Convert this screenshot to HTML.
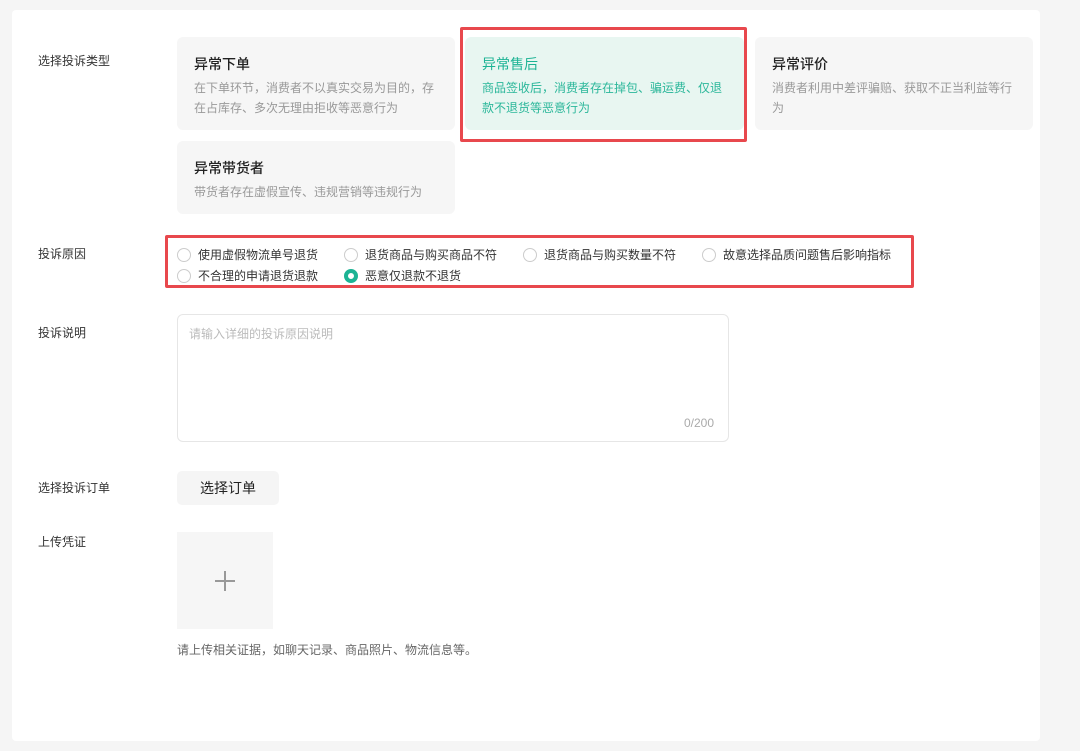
<!DOCTYPE html>
<html><head><meta charset="utf-8"><style>
*{margin:0;padding:0;box-sizing:border-box}
body{width:1080px;height:751px;background:#f5f5f5;font-family:"Liberation Sans","Noto Sans CJK SC",sans-serif;position:relative;overflow:hidden}
.card{position:absolute;left:12px;top:10px;width:1028px;height:731px;background:#fff;border-radius:4px}
.abs{position:absolute}
.lbl{position:absolute;left:38px;font-size:12px;color:#333;line-height:16px}
.tc{position:absolute;background:#f6f6f6;border-radius:6px;padding:0 17px}
.tc h4{position:absolute;left:17px;top:18px;font-size:14px;font-weight:500;color:#222;line-height:18px}
.tc p{position:absolute;left:17px;right:14px;top:42px;font-size:12px;color:#999;line-height:19.5px}
.radio{position:absolute;font-size:12px;color:#333;line-height:16px;padding-left:21px}
.radio:before{content:"";position:absolute;left:0;top:1px;width:14px;height:14px;border:1px solid #ccc;border-radius:50%;box-sizing:border-box}
.radio.on:before{border:4px solid #1cb394}
</style></head><body>
<div class="card"></div>
<div class="lbl" style="top:53px">选择投诉类型</div>
<div class="tc" style="left:177px;top:37px;width:278px;height:93px"><h4>异常下单</h4><p>在下单环节，消费者不以真实交易为目的，存在占库存、多次无理由拒收等恶意行为</p></div>
<div class="tc" style="left:465px;top:37px;width:279px;height:93px;background:#e8f6f1"><h4 style="color:#1cb394;font-weight:400">异常售后</h4><p style="color:#2bb79a">商品签收后，消费者存在掉包、骗运费、仅退款不退货等恶意行为</p></div>
<div class="abs" style="left:460px;top:27px;width:287px;height:115px;border:3px solid #e8484d;border-radius:2px"></div>
<div class="tc" style="left:755px;top:37px;width:278px;height:93px"><h4>异常评价</h4><p>消费者利用中差评骗赔、获取不正当利益等行为</p></div>
<div class="tc" style="left:177px;top:141px;width:278px;height:73px"><h4 style="top:18px">异常带货者</h4><p style="top:42px">带货者存在虚假宣传、违规营销等违规行为</p></div>

<div class="lbl" style="top:246px">投诉原因</div>
<div class="abs" style="left:165px;top:235px;width:749px;height:53px;border:3px solid #e8484d;border-radius:2px"></div>
<div class="radio" style="left:177px;top:247px">使用虚假物流单号退货</div>
<div class="radio" style="left:344px;top:247px">退货商品与购买商品不符</div>
<div class="radio" style="left:523px;top:247px">退货商品与购买数量不符</div>
<div class="radio" style="left:702px;top:247px">故意选择品质问题售后影响指标</div>
<div class="radio" style="left:177px;top:268px">不合理的申请退货退款</div>
<div class="radio on" style="left:344px;top:268px">恶意仅退款不退货</div>

<div class="lbl" style="top:325px">投诉说明</div>
<div class="abs" style="left:177px;top:314px;width:552px;height:128px;border:1px solid #e6e6e6;border-radius:6px"></div>
<div class="abs" style="left:189px;top:325px;font-size:12px;color:#bbb">请输入详细的投诉原因说明</div>
<div class="abs" style="left:684px;top:416px;font-size:12px;color:#aaa">0/200</div>

<div class="lbl" style="top:480px">选择投诉订单</div>
<div class="abs" style="left:177px;top:471px;width:102px;height:34px;background:#f5f5f5;border-radius:5px;font-size:14px;color:#222;text-align:center;line-height:34px">选择订单</div>

<div class="lbl" style="top:534px">上传凭证</div>
<div class="abs" style="left:177px;top:532px;width:96px;height:97px;background:#f6f6f6"></div>
<div class="abs" style="left:215px;top:580px;width:20px;height:2px;background:#999"></div>
<div class="abs" style="left:224px;top:571px;width:2px;height:20px;background:#999"></div>
<div class="abs" style="left:177px;top:641px;font-size:12px;color:#666">请上传相关证据，如聊天记录、商品照片、物流信息等。</div>
</body></html>
